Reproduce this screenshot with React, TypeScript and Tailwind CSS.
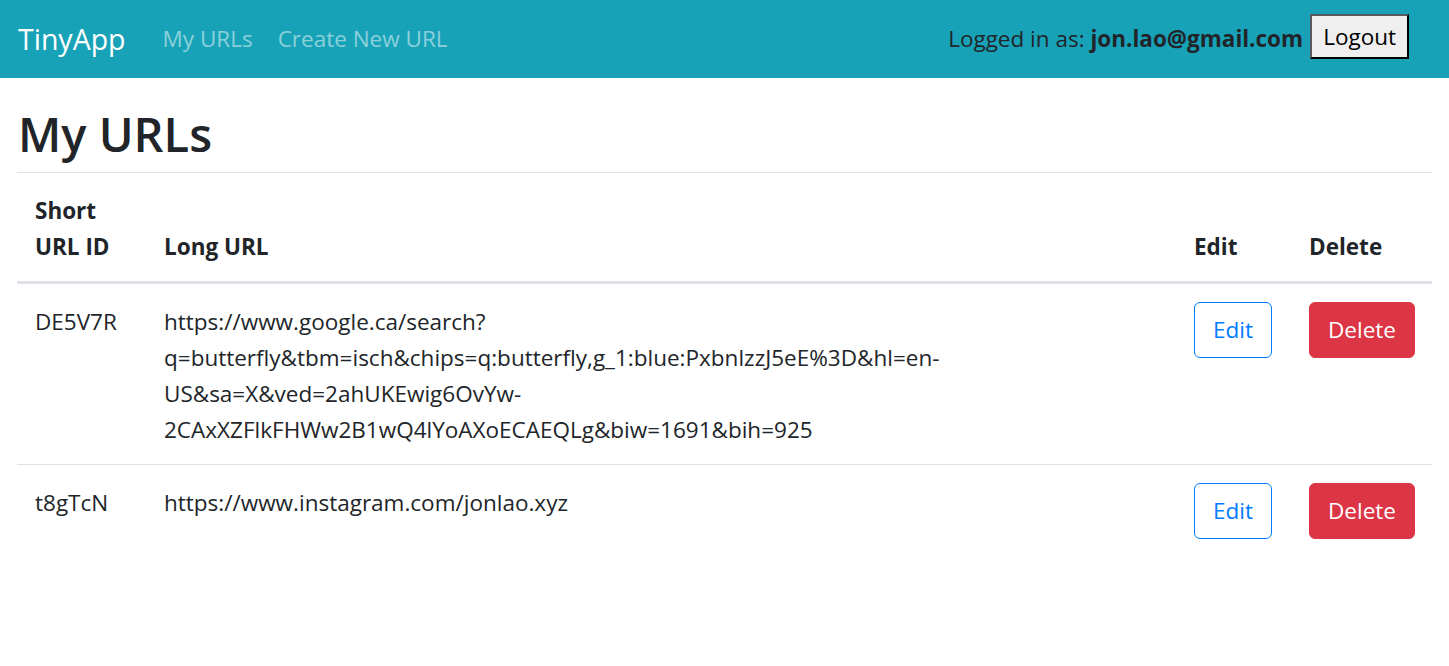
import React from "react";

const urls = [
  {
    id: "DE5V7R",
    lines: [
      "https://www.google.ca/search?",
      "q=butterfly&tbm=isch&chips=q:butterfly,g_1:blue:PxbnlzzJ5eE%3D&hl=en-",
      "US&sa=X&ved=2ahUKEwig6OvYw-",
      "2CAxXZFlkFHWw2B1wQ4lYoAXoECAEQLg&biw=1691&bih=925",
    ],
  },
  { id: "t8gTcN", lines: ["https://www.instagram.com/jonlao.xyz"] },
];

export default function App() {
  const th = "px-[18px] pt-[20px] pb-[16px] text-left align-bottom font-bold border-b-[3px] border-[#dee2e6]";
  const td = "px-[18px] pt-[20px] pb-[16px] align-top border-t border-[#dee2e6]";
  const td0 = "px-[18px] pt-[20px] pb-[16px] align-top";

  return (
    <div
      className="min-h-screen bg-white text-[#212529] text-[22.5px] leading-[36px]"
      style={{ fontFamily: '"Open Sans", "Noto Sans", sans-serif' }}
    >
      <nav className="h-[78px] bg-[#17a2b8] flex items-center pl-[18px] pr-[40px]">
        <span className="text-[28.5px] text-white mr-[37px]">TinyApp</span>
        <a className="text-white/50 mr-[25px]">My URLs</a>
        <a className="text-white/50">Create New URL</a>
        <div className="ml-auto flex items-center">
          <span>
            Logged in as: <b>jon.lao@gmail.com</b>
          </span>
          <button className="ml-[7px] mb-[5px] h-[45px] px-[11px] bg-[#efefef] text-black border-2 border-t-[#5a5a5a] border-l-[#5a5a5a] border-r-black border-b-black">
            Logout
          </button>
        </div>
      </nav>

      <main className="px-[17px]">
        <h1 className="text-[47px] leading-[60px] font-semibold mt-[26px] mb-[8px] pl-[1px]">My URLs</h1>

        <table className="w-full table-fixed border-t border-[#dee2e6]">
          <colgroup>
            <col className="w-[129px]" />
            <col />
            <col className="w-[115px]" />
            <col className="w-[141px]" />
          </colgroup>
          <thead>
            <tr>
              <th className={th}>Short URL ID</th>
              <th className={th}>Long URL</th>
              <th className={th}>Edit</th>
              <th className={th}>Delete</th>
            </tr>
          </thead>
          <tbody>
            {urls.map((u, i) => (
              <tr key={u.id}>
                <td className={i === 0 ? td0 : td}>{u.id}</td>
                <td className={i === 0 ? td0 : td}>
                  {u.lines.map((l, j) => (
                    <div key={j}>{l}</div>
                  ))}
                </td>
                <td className={i === 0 ? td0 : td}>
                  <button className="-mt-[2px] h-[56px] px-[18px] rounded-[6px] border border-[#007bff] text-[#007bff]">
                    Edit
                  </button>
                </td>
                <td className={i === 0 ? td0 : td}>
                  <button className="-mt-[2px] h-[56px] px-[18px] rounded-[6px] border border-[#dc3545] bg-[#dc3545] text-white">
                    Delete
                  </button>
                </td>
              </tr>
            ))}
          </tbody>
        </table>
      </main>
    </div>
  );
}
